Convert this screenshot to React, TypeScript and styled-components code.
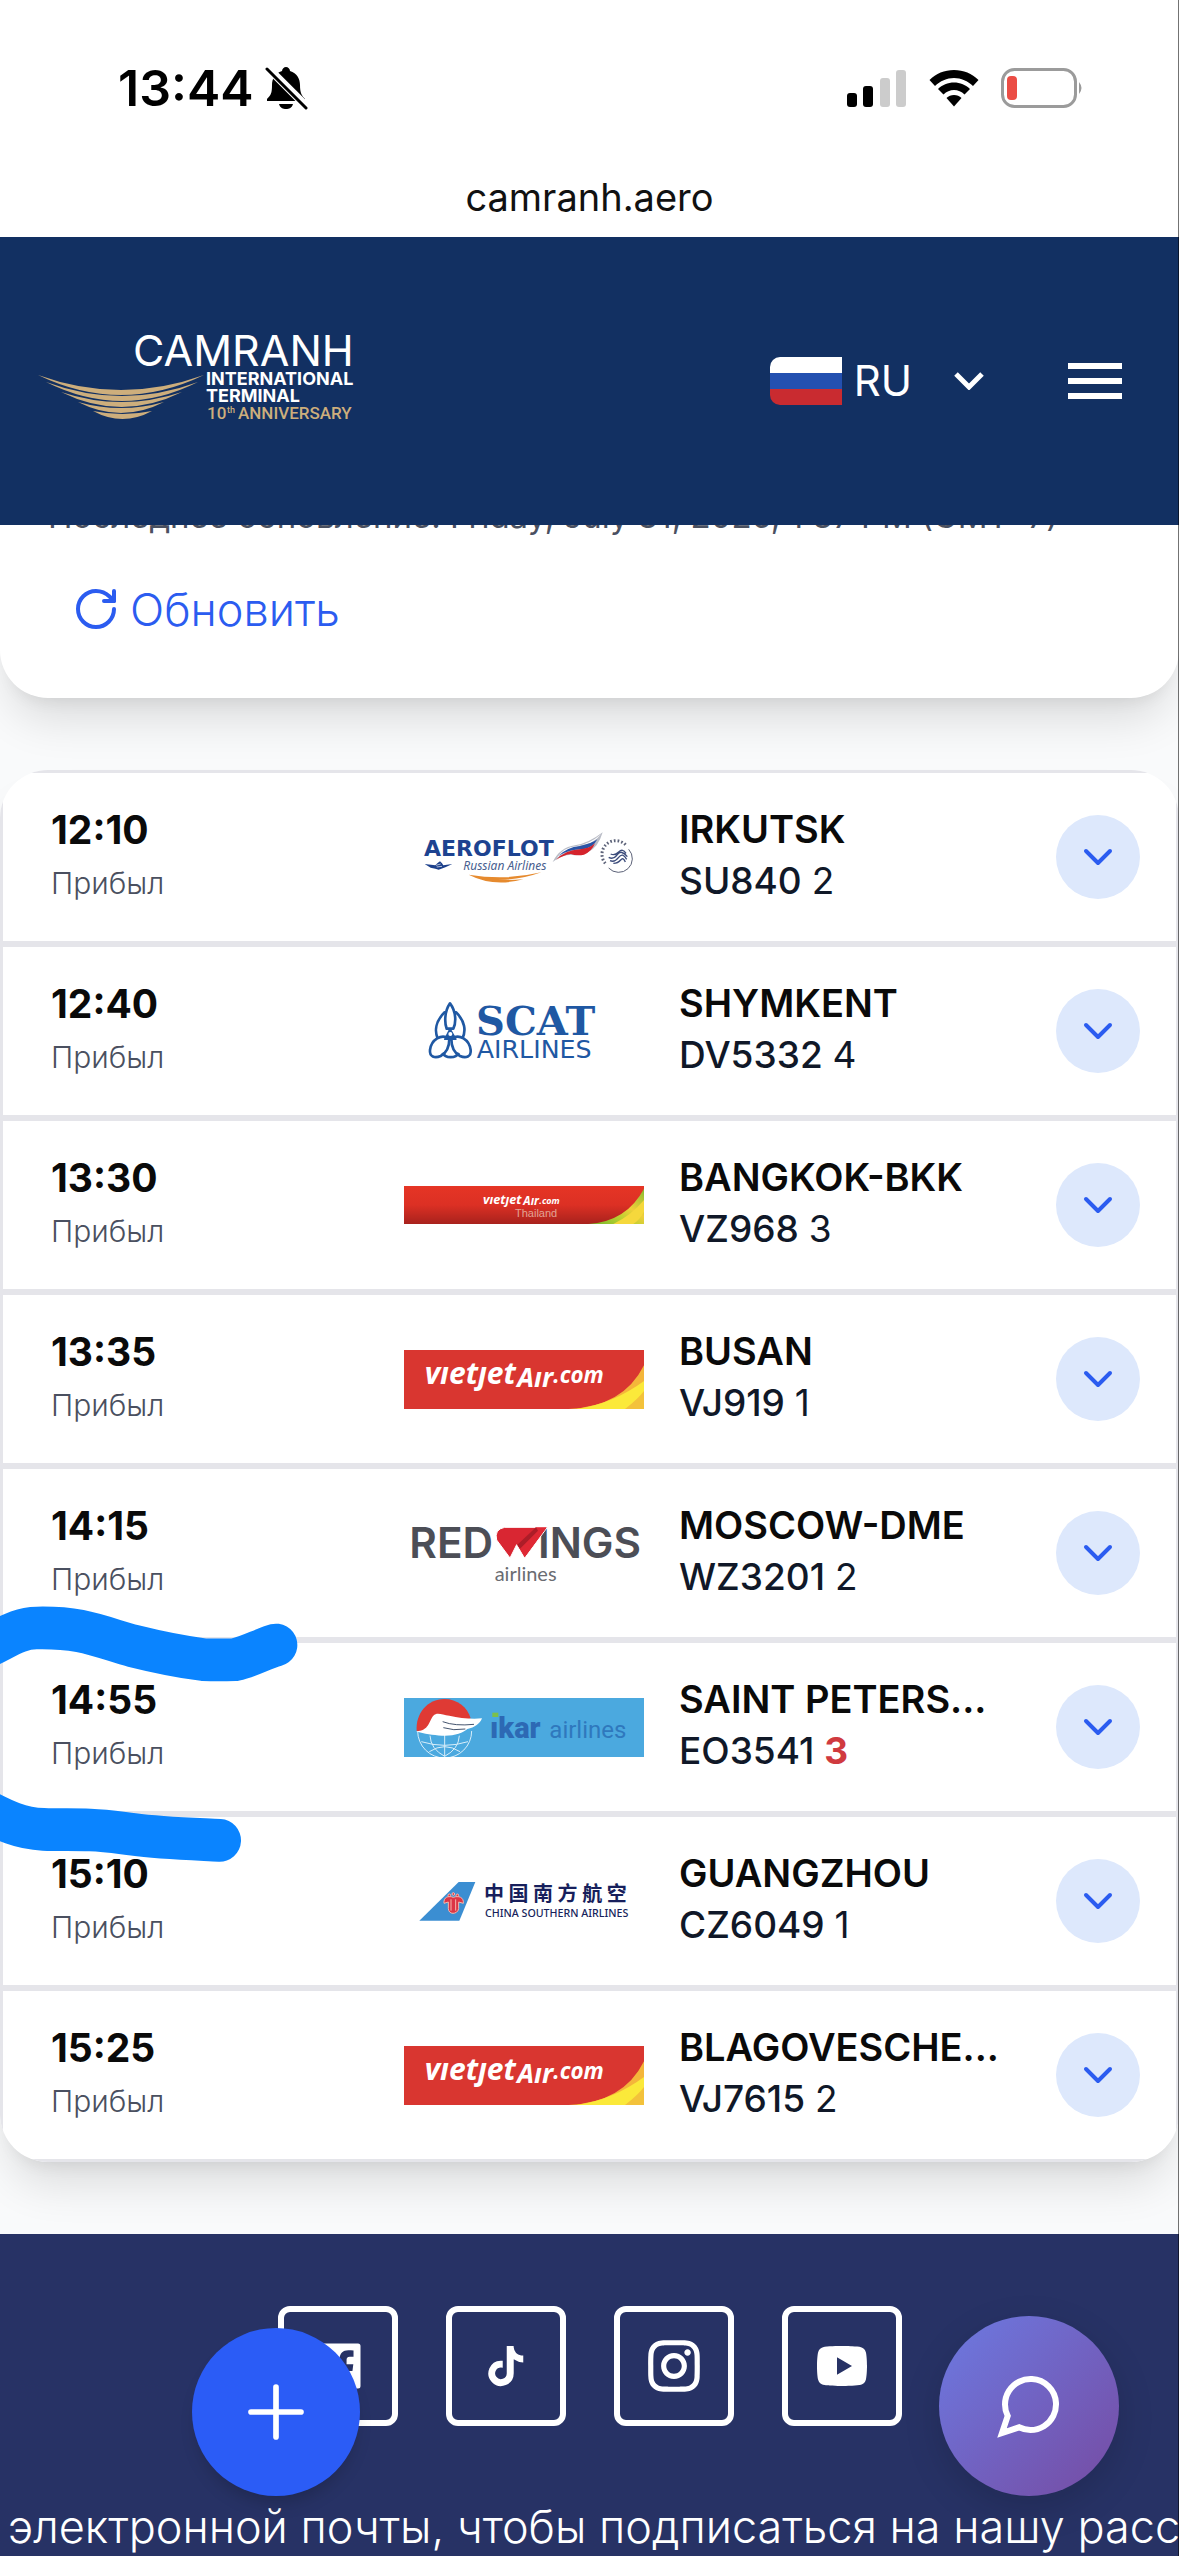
import React from 'react';
import styled, { createGlobalStyle } from 'styled-components';
import { ChevronDown, RotateCw } from 'lucide-react';
import { BiLogoFacebookSquare, BiLogoTiktok } from 'react-icons/bi';
import { RiInstagramLine, RiYoutubeFill } from 'react-icons/ri';

type Flight = {
  time: string;
  status: string;
  city: string;
  code: string;
  belt: string;
  changed?: boolean;
  Logo: React.FC;
};

const NAVY = '#1b3f8b';

const AeroflotLogo = () => (
  <LogoSvg viewBox="72 195 720 192" role="img" aria-label="Aeroflot">
    <text x="132" y="288" fontFamily="DejaVu Sans" fontWeight="700" fontSize="66" fill="#1d4390">
      AEROFLOT
    </text>
    <text x="250" y="330" fontFamily="Noto Sans" fontStyle="italic" fontSize="36" fill="#48608f">
      Russian Airlines
    </text>
    <path d="M518 306 Q540 262 585 256 Q625 250 668 217 Q655 262 625 276 Q600 290 575 284 Q545 284 518 306Z" fill="#b9bcc6" />
    <path d="M530 294 Q550 262 590 258 Q628 253 664 222 Q650 240 630 250 Q580 258 530 294Z" fill="#fff" />
    <path d="M535 288 Q560 262 600 258 Q635 250 652 238 Q640 262 610 268 Q570 266 535 288Z" fill="#2a53a5" />
    <path d="M528 300 Q555 270 600 268 Q628 266 645 250 Q635 275 612 284 Q590 288 572 282 Q548 286 528 300Z" fill="#d5232c" />
    <path d="M134 312 L166 316 L172 310 L180 304 L186 310 L190 316 L217 312 L196 322 L184 326 L176 329 L166 326 L152 323Z" fill={NAVY} />
    <path d="M168 316 L182 312 M170 321 L186 319" stroke="#fff" strokeWidth="2" />
    <path d="M266 344 Q370 378 484 337 Q380 362 266 344Z M266 344 Q340 382 430 358 Q340 366 266 344Z" fill="#e68a2e" />
    <path d="M686 324 A38 38 0 0 0 746 268" fill="none" stroke="#5c6278" strokeWidth="3" />
    <path d="M676 310 A38 38 0 0 1 738 256" fill="none" stroke="#5c6278" strokeWidth="9" strokeDasharray="5 6" />
    <path
      d="M686 292 Q700 300 712 284 T742 290 M690 302 Q704 308 716 292 T740 298 M700 310 Q714 310 722 300 T736 306 M692 282 Q704 288 716 276 T738 280"
      fill="none"
      stroke="#3d4d7c"
      strokeWidth="4"
    />
  </LogoSvg>
);

const ScatLogo = () => (
  <LogoSvg viewBox="72 693 720 240" role="img" aria-label="SCAT Airlines">
    <g fill="#fff" stroke="#1f58a3" strokeWidth="8" strokeLinejoin="round">
      <path d="M194 757 C168 782 162 812 174 838 L246 838 C260 812 254 782 228 757Z" />
      <path d="M210 730 C192 756 194 790 200 806 L220 806 C228 790 230 756 210 730Z" />
      <path d="M208 836 C184 820 154 838 150 870 C148 890 164 896 182 888 C200 878 208 858 208 836Z" />
      <path d="M214 836 C238 820 268 838 272 870 C274 890 258 896 240 888 C222 878 214 858 214 836Z" />
      <path d="M188 878 C196 896 228 896 236 878" fill="none" />
      <path d="M210 806 L194 838 L228 838Z" fill="#1f58a3" strokeWidth="4" />
    </g>
    <circle cx="211" cy="822" r="6" fill="#fff" />
    <text x="288" y="826" fontFamily="DejaVu Serif" fontWeight="700" fontSize="120" fill="#1f58a3">
      SCAT
    </text>
    <text x="290" y="895" fontFamily="DejaVu Sans" fontSize="76" fill="#1f58a3">
      AIRLINES
    </text>
  </LogoSvg>
);

const VietjetThailandLogo = () => (
  <LogoSvg viewBox="72 198 720 114" role="img" aria-label="Vietjet Air Thailand">
    <defs>
      <linearGradient id="vzRed" x1="0" y1="0" x2="0" y2="1">
        <stop offset="0" stopColor="#e63525" />
        <stop offset="0.5" stopColor="#dc3024" />
        <stop offset="1" stopColor="#a8221d" />
      </linearGradient>
      <linearGradient id="vzLeaf" x1="0" y1="1" x2="1" y2="0">
        <stop offset="0" stopColor="#6fb52c" />
        <stop offset="0.35" stopColor="#b5cf30" />
        <stop offset="0.6" stopColor="#f0cf3a" />
        <stop offset="1" stopColor="#86bd30" />
      </linearGradient>
    </defs>
    <rect x="72" y="198" width="720" height="114" fill="url(#vzRed)" />
    <path d="M625 312 Q740 304 792 206 V312Z" fill="url(#vzLeaf)" />
    <path d="M700 312 Q755 285 792 240 V275 Q780 298 760 312Z" fill="#f5d83c" />
    <g fontFamily="Open Sans" fontStyle="italic" fontWeight="700" fill="#fff">
      <text x="309" y="252" fontSize="38">vıetȷet</text>
      <text x="430" y="255" fontSize="35">Aır</text>
      <text x="478" y="252" fontSize="27">.com</text>
    </g>
    <text x="405" y="290" fontFamily="Liberation Sans" fontSize="33" fill="#e3a394">
      Thailand
    </text>
  </LogoSvg>
);

const VietjetLogo = () => (
  <LogoSvg viewBox="72 689 720 177" role="img" aria-label="Vietjet Air">
    <rect x="72" y="689" width="720" height="177" fill="#d93630" />
    <path d="M565 866 Q730 860 792 735 V866Z" fill="#f4b63a" />
    <path d="M590 866 Q700 850 792 782 V866Z" fill="#fbe93a" />
    <path d="M735 866 Q775 835 792 812 V866Z" fill="#f3c23b" />
    <g fontFamily="Open Sans" fontStyle="italic" fontWeight="700" fill="#fff">
      <text x="134" y="791" fontSize="90">vıetȷet</text>
      <text x="412" y="800" fontSize="80">Aır</text>
      <text x="520" y="788" fontSize="67">.com</text>
    </g>
  </LogoSvg>
);

const RedWingsLogo = () => (
  <LogoSvg viewBox="72 99 720 240" role="img" aria-label="Red Wings Airlines">
    <g fontFamily="Inter" fontWeight="600" fontSize="127" fill="#4c4e56">
      <text x="88" y="234">RED</text>
      <text x="474" y="234">INGS</text>
    </g>
    <path d="M374 142 H502 L434 234 L410 194 L390 234 L350 180 Q342 148 374 142Z" fill="#d92632" stroke="#fff" strokeWidth="3" />
    <path d="M468 142 H500 L434 232 L412 194Z" fill="#df2834" />
    <path d="M468 142 L412 194 L420 206 L474 152Z" fill="#ac1d28" />
    <text x="344" y="302" fontFamily="Lato" fontSize="60" fill="#6a6c72">
      airlines
    </text>
  </LogoSvg>
);

const IkarLogo = () => (
  <LogoSvg viewBox="72 653 720 177" role="img" aria-label="Ikar Airlines">
    <rect x="72" y="653" width="720" height="177" fill="#4ba9df" />
    <g fill="none" stroke="#d8eefa" strokeWidth="3">
      <path d="M113 752 A81 81 0 0 0 275 752" />
      <path d="M194 764 V828 M150 766 Q152 806 194 828 M238 766 Q236 806 194 828" />
      <path d="M124 784 Q194 806 264 784 M148 814 Q194 784 240 814" />
    </g>
    <path d="M110 752 C106 700 142 656 193 656 C232 656 262 680 272 714 L180 760Z" fill="#df3a34" />
    <path
      d="M108 752 C148 752 146 722 160 706 C172 694 186 704 208 706 C240 712 272 718 306 714 C300 730 284 742 262 746 C250 758 220 768 186 766 C158 764 134 762 108 752Z"
      fill="#fff"
    />
    <path d="M188 724 Q225 738 282 732 M190 742 Q220 752 256 746" fill="none" stroke="#44546e" strokeWidth="3" />
    <text x="330" y="773" fontFamily="Roboto" fontWeight="900" fontSize="87" fill="#2d69b4">
      ıkar
    </text>
    <rect x="337" y="697" width="18" height="13" fill="#7cc04b" />
    <text x="508" y="773" fontFamily="Roboto" fontSize="72" fill="#2f78bd">
      airlines
    </text>
  </LogoSvg>
);

const ChinaSouthernLogo = () => (
  <LogoSvg viewBox="72 87 720 192" role="img" aria-label="China Southern Airlines">
    <path d="M118 242 L236 126 H286 L238 242Z" fill="#3b8ed2" />
    <g fill="#dc3545" stroke="#f3b9ae" strokeWidth="3">
      <path d="M192 190 C190 172 204 166 220 172 C236 166 252 172 250 190 L236 186 V206 C234 216 226 220 219 220 C210 220 206 214 205 206 V186Z" />
      <path d="M213 178 V212 M227 178 V212" />
      <circle cx="208" cy="166" r="4" />
      <circle cx="220" cy="162" r="4" />
      <circle cx="232" cy="166" r="4" />
    </g>
    <text x="312" y="184" fontFamily="Noto Sans CJK SC" fontWeight="700" fontSize="60" fill="#171f5c">
      中 国 南 方 航 空
    </text>
    <text x="315" y="231" fontFamily="Noto Sans" fontWeight="500" fontSize="32" fill="#171f5c">
      CHINA SOUTHERN AIRLINES
    </text>
  </LogoSvg>
);

// gold arcs of the terminal logo: left x, right x, tip y, inner y, outer y
const ARCS = [
  [38, 204, 375, 390, 395],
  [46, 198, 382, 396, 401],
  [61, 182, 392, 402, 407],
  [78, 164, 402, 408, 413],
  [93, 152, 411, 414, 419],
];

const TerminalLogo = () => (
  <svg viewBox="36 315 324 132" width="324" height="132" role="img" aria-label="Cam Ranh International Terminal">
    {ARCS.map(([left, right, tip, inner, outer]) => {
      const mid = (left + right) / 2;
      return (
        <path
          key={tip}
          d={`M${left} ${tip} Q${mid} ${2 * inner - tip} ${right} ${tip} Q${mid} ${2 * outer - tip} ${left} ${tip}Z`}
          fill="#cdae7c"
        />
      );
    })}
    <text x="133" y="366" fontFamily="Inter" fontSize="43" fill="#fff">
      CAMRANH
    </text>
    <g fontFamily="Inter" fontWeight="700" fontSize="18" fill="#fff">
      <text x="206" y="385">INTERNATIONAL</text>
      <text x="206" y="402">TERMINAL</text>
    </g>
    <g fontFamily="Roboto" fontWeight="500" fontSize="17" fill="#cdae7c">
      <text x="207" y="419">10</text>
      <text x="227" y="413" fontSize="9">th</text>
      <text x="238" y="419">ANNIVERSARY</text>
    </g>
  </svg>
);

const flights: Flight[] = [
  { time: '12:10', status: 'Прибыл', city: 'IRKUTSK', code: 'SU840', belt: '2', Logo: AeroflotLogo },
  { time: '12:40', status: 'Прибыл', city: 'SHYMKENT', code: 'DV5332', belt: '4', Logo: ScatLogo },
  { time: '13:30', status: 'Прибыл', city: 'BANGKOK-BKK', code: 'VZ968', belt: '3', Logo: VietjetThailandLogo },
  { time: '13:35', status: 'Прибыл', city: 'BUSAN', code: 'VJ919', belt: '1', Logo: VietjetLogo },
  { time: '14:15', status: 'Прибыл', city: 'MOSCOW-DME', code: 'WZ3201', belt: '2', Logo: RedWingsLogo },
  { time: '14:55', status: 'Прибыл', city: 'SAINT PETERS...', code: 'EO3541', belt: '3', changed: true, Logo: IkarLogo },
  { time: '15:10', status: 'Прибыл', city: 'GUANGZHOU', code: 'CZ6049', belt: '1', Logo: ChinaSouthernLogo },
  { time: '15:25', status: 'Прибыл', city: 'BLAGOVESCHE...', code: 'VJ7615', belt: '2', Logo: VietjetLogo },
];

const socials = [
  { label: 'Facebook', Icon: BiLogoFacebookSquare, size: 60 },
  { label: 'TikTok', Icon: BiLogoTiktok, size: 48 },
  { label: 'Instagram', Icon: RiInstagramLine, size: 62 },
  { label: 'YouTube', Icon: RiYoutubeFill, size: 60 },
];

const App = () => {
  return (
    <Page>
      <GlobalStyle />
      <StatusBar>
        <Clock>
          13:44
          <svg viewBox="0 0 44 44" width="44" height="44" aria-hidden="true">
            <path d="M22 1 C24 1 26 3 26 5 C33 7 36 13 36 19 C36 27 38 30 41 33 V35 H3 V33 C7 29 8 27 8 19 C8 13 11 7 18 5 C18 3 20 1 22 1Z" />
            <path d="M15 38 H29 C28 42 25 43 22 43 C19 43 16 42 15 38Z" />
            <path d="M4 2 L43 41" stroke="#fff" strokeWidth="8" />
            <path d="M3 3 L42 42" stroke="#000" strokeWidth="3" strokeLinecap="round" />
          </svg>
        </Clock>
        <Indicators>
          <svg viewBox="0 0 60 38" width="60" height="38" aria-hidden="true">
            <rect x="0" y="24" width="10" height="14" rx="3" />
            <rect x="16" y="17" width="10" height="21" rx="3" />
            <rect x="33" y="9" width="10" height="29" rx="3" fill="#ccc" />
            <rect x="49" y="1" width="10" height="37" rx="3" fill="#ccc" />
          </svg>
          <svg viewBox="0 0 50 38" width="50" height="38" aria-hidden="true">
            <path d="M25 1 C34.500 1 43 4.500 49.500 11 L44 17 C39 12 32 9 25 9 C18 9 11 12 6 17 L0.500 11 C7 4.500 15.500 1 25 1Z" />
            <path d="M25 13.500 C31 13.500 37 16 41 20 L35.500 25.500 C32.500 22.500 29 21 25 21 C21 21 17.500 22.500 14.500 25.500 L9 20 C13 16 19 13.500 25 13.500Z" />
            <path d="M25 26 C28 26 30.500 27 32.500 29 L25 37.500 L17.500 29 C19.500 27 22 26 25 26Z" />
          </svg>
          <svg viewBox="0 0 82 40" width="82" height="40" aria-hidden="true">
            <rect x="1.500" y="1.500" width="73" height="37" rx="12" fill="none" stroke="#9b9b9b" strokeWidth="3" />
            <rect x="6" y="8" width="10" height="24" rx="4" fill="#eb4d45" />
            <path d="M78 14 Q83 20 78 26Z" fill="#9b9b9b" />
          </svg>
        </Indicators>
      </StatusBar>
      <Address>camranh.aero</Address>

      <Header>
        <TerminalLogo />
        <HeaderTools>
          <LanguageButton type="button">
            <Flag viewBox="0 0 72 48" width="72" height="48" aria-hidden="true">
              <rect width="72" height="16" fill="#fff" />
              <rect y="16" width="72" height="16" fill="#2350b0" />
              <rect y="32" width="72" height="16" fill="#c92b30" />
            </Flag>
            RU
            <LanguageArrow viewBox="0 0 30 18" width="30" height="18" aria-hidden="true">
              <path d="M2 2 L15 15 L28 2" fill="none" stroke="#fff" strokeWidth="5" />
            </LanguageArrow>
          </LanguageButton>
          <MenuButton type="button" aria-label="Меню">
            <span />
            <span />
            <span />
          </MenuButton>
        </HeaderTools>
      </Header>

      <FilterCard>
        <Updated>Последнее обновление: Friday, July 31, 2026, 1:37 PM (GMT+7)</Updated>
        <RefreshButton type="button">
          <RotateCw size={48} strokeWidth={2} />
          Обновить
        </RefreshButton>
      </FilterCard>

      <Board>
        <FlightList>
          {flights.map(({ time, status, city, code, belt, changed, Logo }) => (
            <FlightRow key={time}>
              <TimeCell>
                <Time>{time}</Time>
                <Status>{status}</Status>
              </TimeCell>
              <Logo />
              <RouteCell>
                <City>{city}</City>
                <Code>
                  {code} <Belt $changed={changed}>{belt}</Belt>
                </Code>
              </RouteCell>
              <ExpandButton type="button" aria-label={`${code} ${city}`}>
                <ChevronDown size={48} strokeWidth={2} />
              </ExpandButton>
            </FlightRow>
          ))}
        </FlightList>
        <Marker viewBox="0 0 900 900" width="300" height="300" aria-hidden="true">
          <path d="M-40 200 C20 172 55 144 110 144 C160 143 190 144 240 153 C300 165 350 185 400 198 C460 213 540 230 610 239 C640 240 670 240 705 239 C750 229 790 205 828 195" />
          <path d="M-40 694 C10 720 60 745 130 748 C180 750 220 748 270 750 C320 752 350 757 400 763 C480 774 580 777 659 781" />
        </Marker>
      </Board>

      <Footer>
        <Socials>
          {socials.map(({ label, Icon, size }) => (
            <SocialLink key={label} href="#" aria-label={label}>
              <Icon size={size} />
            </SocialLink>
          ))}
        </Socials>
        <Newsletter>электронной почты, чтобы подписаться на нашу рассылку</Newsletter>
      </Footer>

      <AddButton type="button" aria-label="Добавить">
        <svg viewBox="0 0 24 24" width="80" height="80" aria-hidden="true">
          <path d="M12 4.500 V19.500 M4.500 12 H19.500" stroke="#fff" strokeWidth="1.700" strokeLinecap="round" />
        </svg>
      </AddButton>
      <ChatButton type="button" aria-label="Чат">
        <svg viewBox="0 0 24 24" width="72" height="72" aria-hidden="true">
          <path
            d="M21 11.500a8.380 8.380 0 0 1-.9 3.800 8.500 8.500 0 0 1-7.600 4.700 8.380 8.380 0 0 1-3.800-.9L3 21l1.900-5.700a8.380 8.380 0 0 1-.9-3.800 8.500 8.500 0 0 1 4.700-7.600 8.380 8.380 0 0 1 3.800-.9h.5a8.480 8.480 0 0 1 8 8v.5z"
            fill="none"
            stroke="#fff"
            strokeWidth="2"
          />
        </svg>
      </ChatButton>
    </Page>
  );
};

export default App;

const GlobalStyle = createGlobalStyle`
  * {
    box-sizing: border-box;
  }
  body {
    margin: 0;
    background-color: #f9fafb;
    font-family: Inter, 'Noto Sans', sans-serif;
  }
  button {
    padding: 0;
    border: none;
    background: none;
    font-family: inherit;
    cursor: pointer;
  }
`;

const Page = styled.div`
  position: relative;
  min-height: 100vh;
  display: flex;
  flex-direction: column;
  overflow: hidden;

  /* thin line along the right edge of the screen */
  &::after {
    content: '';
    position: absolute;
    top: 0;
    right: 0;
    bottom: 0;
    width: 1px;
    background-color: rgba(0, 0, 0, 0.55);
    z-index: 5;
  }
`;

//상단 상태바
const StatusBar = styled.div`
  height: 172px;
  padding: 4px 96px 0 118px;
  display: flex;
  align-items: center;
  justify-content: space-between;
  background-color: #ffffff;
`;
const Clock = styled.div`
  display: flex;
  align-items: center;
  gap: 10px;
  font-size: 50px;
  font-weight: 600;
  line-height: 60px;
  color: #000000;
`;
const Indicators = styled.div`
  display: flex;
  align-items: center;
  gap: 22px;
`;
const Address = styled.div`
  height: 65px;
  background-color: #ffffff;
  font-size: 38px;
  line-height: 50px;
  text-align: center;
  color: #111111;
`;

//헤더
const Header = styled.header`
  position: relative;
  z-index: 2;
  height: 288px;
  padding: 0 57px 0 36px;
  display: flex;
  align-items: center;
  justify-content: space-between;
  background-color: #123062;
`;
const HeaderTools = styled.div`
  display: flex;
  align-items: center;
  gap: 84px;
`;
const LanguageButton = styled.button`
  display: flex;
  align-items: center;
  gap: 12px;
  font-size: 42px;
  line-height: 48px;
  color: #ffffff;
`;
const Flag = styled.svg`
  border-radius: 10px 0 0 10px;
`;
const LanguageArrow = styled.svg`
  margin-left: 30px;
`;
const MenuButton = styled.button`
  width: 54px;
  display: flex;
  flex-direction: column;
  gap: 9px;

  span {
    height: 6px;
    background-color: #ffffff;
  }
`;

//필터 카드
const FilterCard = styled.section`
  margin-top: -48px;
  padding: 12px 48px 41px;
  display: flex;
  flex-direction: column;
  align-items: flex-start;
  gap: 18px;
  border-radius: 0 0 48px 48px;
  background-color: #ffffff;
  box-shadow: 0 30px 45px -9px rgba(0, 0, 0, 0.12), 0 12px 18px -12px rgba(0, 0, 0, 0.1);
`;
const Updated = styled.div`
  font-size: 33px;
  line-height: 54px;
  white-space: nowrap;
  color: #4a5060;
`;
const RefreshButton = styled.button`
  height: 96px;
  padding: 0 24px;
  display: flex;
  align-items: center;
  gap: 10px;
  font-size: 45px;
  font-weight: 300;
  color: #2b5cf0;
`;

//항공편 목록
const Board = styled.section`
  position: relative;
  margin: 72px 0;
`;
const FlightList = styled.ul`
  margin: 0;
  padding: 0;
  list-style: none;
  overflow: hidden;
  border-radius: 48px;
  background-color: #ffffff;
  box-shadow: 0 30px 45px -9px rgba(0, 0, 0, 0.12), 0 12px 18px -12px rgba(0, 0, 0, 0.1);
`;
const FlightRow = styled.li`
  height: 174px;
  padding: 0 36px 0 48px;
  display: grid;
  grid-template-columns: minmax(0, 318fr) 240px minmax(0, 342fr) 84px;
  column-gap: 35px;
  align-items: center;
  border: 3px solid #e5e5ea;
`;
const TimeCell = styled.div`
  padding-bottom: 4px;
  display: flex;
  flex-direction: column;
  gap: 8px;
`;
const Time = styled.time`
  font-size: 39px;
  font-weight: 700;
  line-height: 48px;
  color: #0a0a0a;
`;
const Status = styled.span`
  font-size: 30px;
  font-weight: 300;
  line-height: 42px;
  color: #4a5060;
`;
const LogoSvg = styled.svg`
  width: 240px;
`;
const RouteCell = styled.div`
  padding-bottom: 4px;
  display: flex;
  flex-direction: column;
`;
const City = styled.span`
  font-size: 38px;
  font-weight: 600;
  line-height: 51px;
  white-space: nowrap;
  color: #0a0a0a;
`;
const Code = styled.span`
  font-size: 37px;
  font-weight: 500;
  line-height: 51px;
  color: #101828;
`;
const Belt = styled.span<{ $changed?: boolean }>`
  font-weight: ${({ $changed }) => ($changed ? 700 : 400)};
  color: ${({ $changed }) => ($changed ? '#d03a3f' : 'inherit')};
`;
const ExpandButton = styled.button`
  width: 84px;
  height: 84px;
  display: flex;
  align-items: center;
  justify-content: center;
  border-radius: 50%;
  background-color: #dde8fc;
  color: #2b5cf0;
`;
const Marker = styled.svg`
  position: absolute;
  top: 810px;
  left: 0;
  pointer-events: none;

  path {
    fill: none;
    stroke: #0a84ff;
    stroke-width: 128;
    stroke-linecap: round;
  }
`;

//푸터
const Footer = styled.footer`
  flex: 1;
  padding-top: 72px;
  display: flex;
  flex-direction: column;
  gap: 72px;
  overflow: hidden;
  background-color: #273265;
`;
const Socials = styled.nav`
  display: flex;
  justify-content: center;
  gap: 48px;
`;
const SocialLink = styled.a`
  width: 120px;
  height: 120px;
  display: flex;
  align-items: center;
  justify-content: center;
  border: 6px solid #ffffff;
  border-radius: 12px;
  color: #ffffff;
`;
const Newsletter = styled.p`
  margin: 0;
  padding-left: 8px;
  font-size: 45px;
  font-weight: 300;
  line-height: 58px;
  white-space: nowrap;
  color: #ffffff;
`;

//플로팅 버튼
const FloatingButton = styled.button`
  position: fixed;
  bottom: 60px;
  z-index: 3;
  display: flex;
  align-items: center;
  justify-content: center;
  border-radius: 50%;
`;
const AddButton = styled(FloatingButton)`
  left: 192px;
  width: 168px;
  height: 168px;
  background-color: #2b5cf6;
  box-shadow: 0 12px 18px -6px rgba(0, 0, 0, 0.2);
`;
const ChatButton = styled(FloatingButton)`
  right: 60px;
  width: 180px;
  height: 180px;
  background: linear-gradient(135deg, #6c7ae2 0%, #764ba2 100%);
  box-shadow: 0 12px 36px rgba(0, 0, 0, 0.15);
`;
